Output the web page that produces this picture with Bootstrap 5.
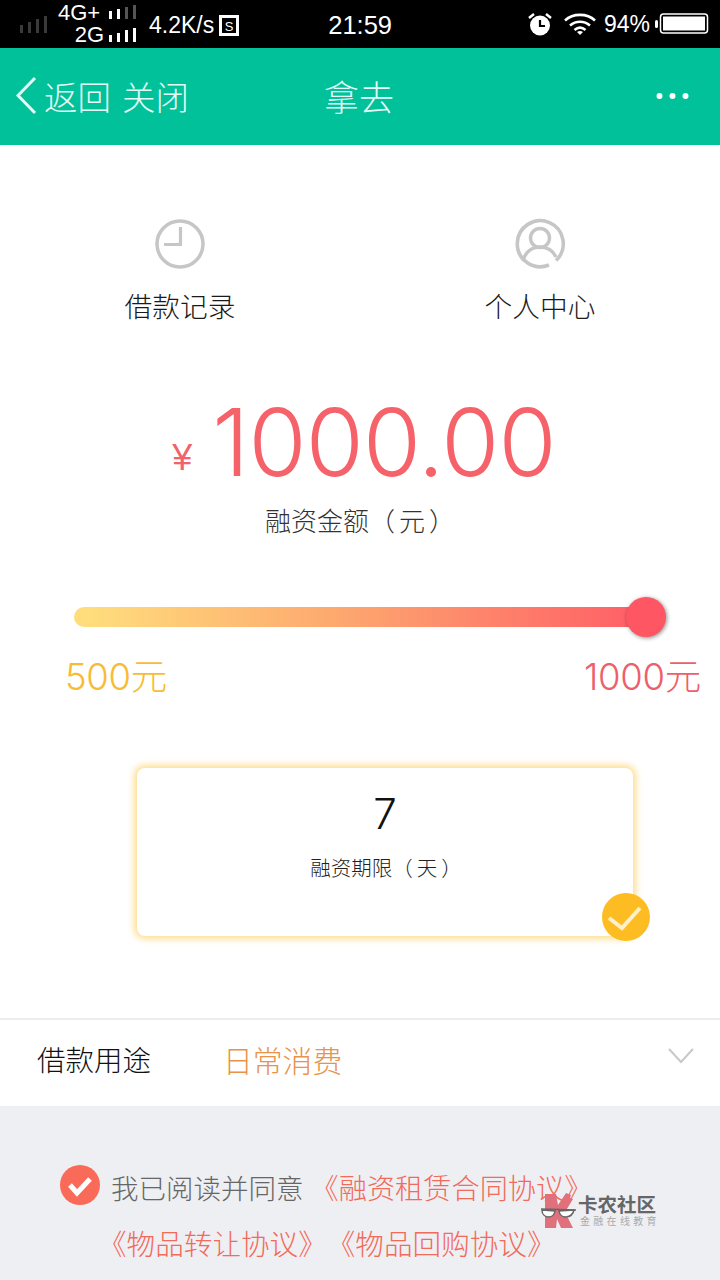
<!DOCTYPE html>
<html lang="zh">
<head>
<meta charset="utf-8">
<link href="https://cdn.jsdelivr.net/npm/bootstrap@5.3.0/dist/css/bootstrap.min.css" rel="stylesheet">
<style>
html,body{margin:0;height:1280px;overflow:hidden;background:#fff;}
body{font-family:"Noto Sans CJK SC","Noto Sans",sans-serif;font-weight:300;color:#111;width:720px;position:relative;text-spacing-trim:space-all;}
.tcp{font-family:"Noto Sans CJK TC",sans-serif;}
.inpar{margin:0 4px;}
.sbar{height:48px;background:#000;color:#fff;font-family:"Liberation Sans",sans-serif;font-weight:400;padding:0 11px 0 19px;white-space:nowrap;line-height:1;}
.netgrid{margin-left:9px;width:80px;}
.netrow{height:22px;}
.netrow span{font-size:22px;}
.sp1{font-size:23px;margin-left:11px;padding-top:3px;}
.ic-s{margin-left:5px;margin-top:2px;}
.sp2{font-size:25.500px;margin-left:89px;padding-top:4px;}
.ic-w{margin-left:10px;}
.sp3{font-size:23px;margin-left:7px;}
.ic-b{margin-left:5px;}
.tbar{height:97px;background:#00c199;color:#e4fbf5;font-size:33.500px;line-height:48px;white-space:nowrap;padding:0 29px 2px 14px;}
.tt1{margin-left:6px;}
.tt2{margin-left:11px;}
.tt3{margin-left:135px;font-size:35px;}
.tabcol{width:360px;padding-top:73px;height:233px;}
.tabcol .lbl{font-size:27.700px;line-height:38px;margin-top:16px;color:#1a1a1a;}
.tabcol svg{display:block;margin:0 auto;}
.amount{height:128px;padding-left:8px;}
.yen{font-size:36px;color:#f2626a;font-weight:400;margin-right:20px;margin-top:32px;font-family:"Liberation Sans",sans-serif;}
.big{font-size:94px;line-height:100px;color:#f6626a;font-family:"Inter","Liberation Sans",sans-serif;font-weight:300;letter-spacing:-.8px;}
.sub{font-size:26px;line-height:36px;text-align:center;color:#333;margin-top:-4px;}
.track{position:relative;margin:69px 0 0 74px;width:585px;height:20px;border-radius:10px;background:linear-gradient(90deg,#ffdc7c 3%,#fda86f 45%,#ff5a66 100%);}
.thumb{position:absolute;left:552px;top:-10px;width:40px;height:40px;border-radius:50%;background:#ff5664;box-shadow:1px 1px 4px rgba(0,0,0,.45);}
.rngrow{margin-top:28px;height:44px;padding:0 19px 0 65px;}
.rng{font-size:36.500px;line-height:44px;white-space:nowrap;font-family:"Inter","Noto Sans CJK SC",sans-serif;font-weight:300;letter-spacing:-.3px;}
.rng-a{color:#f8bc32;}.rng-b{color:#ee5f6b;}
.term{position:relative;margin:69px 0 0 137px;width:496px;height:168px;background:#fff;border-radius:8px;box-shadow:0 0 6px 3px rgba(255,208,100,.7);text-align:center;}
.term .n{font-size:42px;line-height:50px;padding-top:21px;color:#111;font-family:"Inter",sans-serif;font-weight:300;box-sizing:content-box;}
.term .t{font-size:20.500px;line-height:30px;margin-top:13px;color:#222;padding-left:2px;}
.chk{position:absolute;left:465px;top:125px;}
.purpose{margin-top:82px;height:88px;border-top:2px solid #ececec;background:#fff;padding:19px 26px 0 37px;}
.purpose .a{font-size:28.500px;line-height:40px;color:#111;}
.purpose .b{font-size:29.800px;line-height:40px;color:#e8924a;margin-left:72px;}
.foot{height:174px;background:#eeeff3;padding-top:59px;}
.frow{white-space:nowrap;font-size:28.200px;line-height:40px;font-weight:300;}
.frow1{padding-left:60px;}
.frow2{padding-left:98px;margin-top:16px;font-size:28.600px;}
.gr{color:#666;font-size:27.500px;}.rd{color:#f26a5a;}
.fa1{margin:2px 0 0 11px;}.fa2{margin:2px 0 0 7px;}
.wm{position:absolute;left:540px;top:1192px;width:122px;height:38px;}
.wm1{position:absolute;left:38px;top:2px;font-size:19.500px;font-weight:700;color:#666;line-height:20px;white-space:nowrap;}
.wm2{position:absolute;left:40px;top:23px;font-size:10px;color:#aaa;letter-spacing:3.300px;line-height:12px;white-space:nowrap;font-weight:400;}
</style>
</head>
<body>
<div class="sbar d-flex align-items-center">
  <svg width="30" height="20"><g fill="#3a3a3a"><rect x="1" y="11" width="3" height="8"/><rect x="9" y="8" width="3" height="11"/><rect x="17" y="5" width="3" height="14"/><rect x="25" y="2" width="3" height="17"/></g></svg>
  <div class="netgrid">
    <div class="netrow d-flex align-items-center justify-content-end"><span>4G+</span><svg class="ms-2" width="30" height="16"><rect x="1" y="6" width="3" height="8" fill="#fff"/><rect x="9" y="4" width="3" height="10" fill="#fff"/><rect x="17" y="2" width="3" height="12" fill="#555"/><rect x="25" y="0" width="3" height="14" fill="#555"/></svg></div>
    <div class="netrow d-flex align-items-center justify-content-end"><span>2G</span><svg class="ms-1" width="30" height="16"><g fill="#fff"><rect x="1" y="8" width="3" height="7"/><rect x="9" y="6" width="3" height="9"/><rect x="17" y="3" width="3" height="12"/><rect x="25" y="1" width="3" height="14"/></g></svg></div>
  </div>
  <span class="sp1">4.2K/s</span>
  <svg class="ic-s" width="20" height="21"><rect x="1.500" y="1.500" width="17" height="18" fill="none" stroke="#fff" stroke-width="3"/><text x="10" y="16" font-size="13" text-anchor="middle" fill="#fff" font-family="Liberation Sans">S</text></svg>
  <span class="sp2">21:59</span>
  <svg class="ms-auto" width="26" height="24" viewBox="0 0 26 24"><circle cx="13" cy="13.500" r="10" fill="#fff"/><path d="M13 8v6h5" fill="none" stroke="#000" stroke-width="2.200"/><path d="M2 6l5-4M24 6l-5-4" stroke="#fff" stroke-width="2.500" fill="none"/></svg>
  <svg class="ic-w" width="34" height="24" viewBox="0 0 34 24"><g fill="none" stroke="#fff" stroke-width="2.600"><path d="M2 8.500C10 1 24 1 32 8.500"/><path d="M7 13.500c6-5 14-5 20 0"/><path d="M11.500 18c3.500-3 7.500-3 11 0"/></g><path d="M17 23l-3-3c2-1.400 4-1.400 6 0z" fill="#fff"/></svg>
  <span class="sp3">94%</span>
  <svg class="ic-b" width="54" height="22"><rect x="0" y="7" width="3" height="8" rx="1.500" fill="#fff"/><rect x="5.500" y="1" width="47" height="19" rx="3" fill="none" stroke="#fff" stroke-width="1.500"/><rect x="8" y="3.500" width="42" height="14" fill="#fff"/></svg>
</div>
<div class="tbar d-flex align-items-center">
  <svg width="24" height="42" viewBox="0 0 24 42"><path d="M21 3L4 20.500 21 38" fill="none" stroke="#e4fbf5" stroke-width="3"/></svg>
  <span class="tt1">返回</span>
  <span class="tt2">关闭</span>
  <span class="tt3">拿去</span>
  <svg class="ms-auto" width="36" height="10"><g fill="#fff"><circle cx="4.500" cy="5" r="3"/><circle cx="17.500" cy="5" r="3"/><circle cx="30.500" cy="5" r="3"/></g></svg>
</div>
<div class="d-flex text-center">
  <div class="tabcol">
    <svg width="52" height="52" viewBox="0 0 52 52"><circle cx="26" cy="26" r="23" fill="none" stroke="#c6c6c6" stroke-width="3.600"/><path d="M26.500 9v17.500H10" fill="none" stroke="#c6c6c6" stroke-width="3.200"/></svg>
    <div class="lbl">借款记录</div>
  </div>
  <div class="tabcol">
    <svg width="52" height="52" viewBox="0 0 52 52"><path d="M35 47A23 23 0 1 1 42 42.500" fill="none" stroke="#c6c6c6" stroke-width="3.600"/><circle cx="26" cy="20" r="9.500" fill="none" stroke="#c6c6c6" stroke-width="3.400"/><path d="M9 43c2-9 9-14 17-14s13 4 16 10" fill="none" stroke="#c6c6c6" stroke-width="3.400"/></svg>
    <div class="lbl">个人中心</div>
  </div>
</div>
<div class="amount d-flex justify-content-center align-items-center">
  <span class="yen">¥</span><span class="big">1000.00</span>
</div>
<div class="sub">融资金额<span class="tcp">（</span><span class="inpar">元</span><span class="tcp">）</span></div>
<div class="track"><div class="thumb"></div></div>
<div class="rngrow d-flex justify-content-between">
  <span class="rng rng-a">500元</span>
  <span class="rng rng-b">1000元</span>
</div>
<div class="term">
  <div class="n">7</div>
  <div class="t">融资期限<span class="tcp">（</span><span class="inpar">天</span><span class="tcp">）</span></div>
  <svg class="chk" width="48" height="48" viewBox="0 0 48 48"><circle cx="24" cy="24" r="24" fill="#fdbd22"/><path d="M7 25l13 10 18-20" fill="none" stroke="#fff0cc" stroke-width="4"/></svg>
</div>
<div class="purpose d-flex">
  <span class="a">借款用途</span>
  <span class="b">日常消费</span>
  <svg class="ms-auto mt-2" width="26" height="18"><path d="M1 2l12 13L25 2" fill="none" stroke="#c8c8c8" stroke-width="2"/></svg>
</div>
<div class="foot">
  <div class="frow frow1 d-flex align-items-start">
    <svg width="40" height="40" viewBox="0 0 40 40"><circle cx="20" cy="20" r="20" fill="#f96a58"/><path d="M10 20l7 8 13-14" fill="none" stroke="#fff" stroke-width="5"/></svg>
    <span class="gr fa1">我已阅读并同意</span>
    <span class="rd fa2">《融资租赁合同协议》</span>
  </div>
  <div class="frow frow2">
    <span class="rd">《物品转让协议》</span><span class="rd">《物品回购协议》</span>
  </div>
</div>
<div class="wm">
  <svg width="38" height="38" viewBox="0 0 38 38"><path d="M5 2h11l2 11L26 1l5 2-1 3 3 1-8 13 8 16H21l-4-9-1 9H5z" fill="#e0707c"/><path d="M1 17l35 1" stroke="#666" stroke-width="1.500"/><path d="M2 18c0 9 12 9 13 1zM19 19c1 8 13 8 15-1z" fill="#fff" stroke="#666" stroke-width="1.500"/></svg>
  <span class="wm1">卡农社区</span>
  <span class="wm2">金融在线教育</span>
</div>
</body>
</html>
